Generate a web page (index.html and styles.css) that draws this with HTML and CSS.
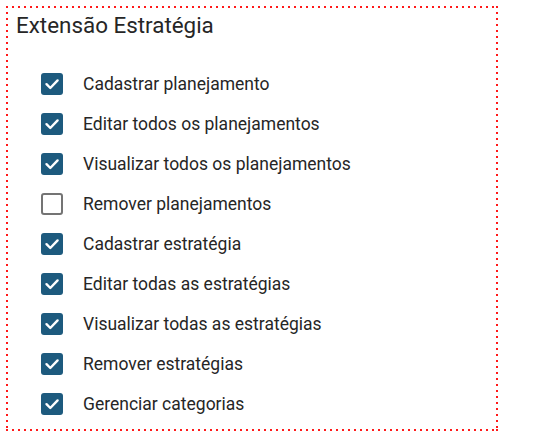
FILE: index.html
```html
<!DOCTYPE html>
<html lang="pt">
<head>
<meta charset="utf-8">
<link rel="stylesheet" href="styles.css">
</head>
<body>
<section class="panel">
  <h2 class="title">Extensão Estratégia</h2>
  <ul class="list">
    <li class="item"><span class="box checked"><svg viewBox="0 0 22 22"><path d="M5.5 11.2l3.8 3.8 7.3-7.6"/></svg></span><span class="label">Cadastrar planejamento</span></li>
    <li class="item"><span class="box checked"><svg viewBox="0 0 22 22"><path d="M5.5 11.2l3.8 3.8 7.3-7.6"/></svg></span><span class="label">Editar todos os planejamentos</span></li>
    <li class="item"><span class="box checked"><svg viewBox="0 0 22 22"><path d="M5.5 11.2l3.8 3.8 7.3-7.6"/></svg></span><span class="label">Visualizar todos os planejamentos</span></li>
    <li class="item"><span class="box"></span><span class="label">Remover planejamentos</span></li>
    <li class="item"><span class="box checked"><svg viewBox="0 0 22 22"><path d="M5.5 11.2l3.8 3.8 7.3-7.6"/></svg></span><span class="label">Cadastrar estratégia</span></li>
    <li class="item"><span class="box checked"><svg viewBox="0 0 22 22"><path d="M5.5 11.2l3.8 3.8 7.3-7.6"/></svg></span><span class="label">Editar todas as estratégias</span></li>
    <li class="item"><span class="box checked"><svg viewBox="0 0 22 22"><path d="M5.5 11.2l3.8 3.8 7.3-7.6"/></svg></span><span class="label">Visualizar todas as estratégias</span></li>
    <li class="item"><span class="box checked"><svg viewBox="0 0 22 22"><path d="M5.5 11.2l3.8 3.8 7.3-7.6"/></svg></span><span class="label">Remover estratégias</span></li>
    <li class="item"><span class="box checked"><svg viewBox="0 0 22 22"><path d="M5.5 11.2l3.8 3.8 7.3-7.6"/></svg></span><span class="label">Gerenciar categorias</span></li>
  </ul>
</section>
</body>
</html>
```
FILE: styles.css
```css
html, body {
  margin: 0;
  padding: 0;
  background: #fff;
}
body {
  font-family: Roboto, "Liberation Sans", sans-serif;
  color: #222;
}
.panel {
  margin: 6px 0 0 6px;
  width: 492px;
  height: 425px;
  box-sizing: border-box;
  padding: 0 0 0 10px;
  background:
    repeating-linear-gradient(90deg, #ff1a1a 0 2px, transparent 2px 6px) left top / 100% 2px no-repeat,
    repeating-linear-gradient(90deg, #ff1a1a 0 2px, transparent 2px 6px) left bottom / 100% 2px no-repeat,
    repeating-linear-gradient(180deg, #ff1a1a 0 2px, transparent 2px 6px) left top / 2px 100% no-repeat,
    repeating-linear-gradient(180deg, #ff1a1a 0 2px, transparent 2px 6px) right top / 2px 100% no-repeat,
    linear-gradient(#ff1a1a, #ff1a1a) right bottom / 2px 2px no-repeat;
}
.title {
  margin: 0;
  padding-top: 4px;
  font-size: 22.4px;
  font-weight: 400;
  line-height: 30px;
  color: #262626;
}
.list {
  list-style: none;
  margin: 33px 0 0 0;
  padding: 0 0 0 25px;
  display: flex;
  flex-direction: column;
  gap: 18px;
}
.item {
  display: flex;
  align-items: center;
  gap: 20px;
  height: 22px;
}
.box {
  width: 22px;
  height: 22px;
  box-sizing: border-box;
  border: 2px solid #747474;
  border-radius: 3px;
  display: flex;
  flex: none;
}
.box.checked {
  background: #1d5a7e;
  border: none;
}
.box svg {
  width: 22px;
  height: 22px;
}
.box path {
  fill: none;
  stroke: #fff;
  stroke-width: 2.4;
  stroke-linecap: round;
  stroke-linejoin: round;
}
.label {
  font-size: 17.5px;
  color: #262626;
  line-height: 22px;
}
```
